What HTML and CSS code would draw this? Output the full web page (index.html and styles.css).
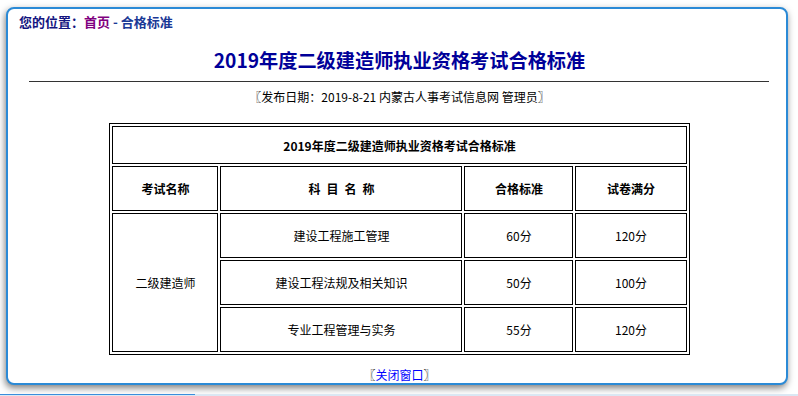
FILE: index.html
```html
<!DOCTYPE html>
<html lang="zh-CN">
<head>
<meta charset="utf-8">
<title>2019年度二级建造师执业资格考试合格标准</title>
<link rel="stylesheet" href="styles.css">
</head>
<body>
<div class="window">
  <div class="crumb">您的位置：<a class="crumb-home" href="#">首页</a><span class="crumb-cur"> - 合格标准</span></div>
  <div class="content">
    <h1 class="title">2019年度二级建造师执业资格考试合格标准</h1>
    <div class="rule"></div>
    <p class="meta">〖发布日期：2019-8-21 内蒙古人事考试信息网 管理员〗</p>
    <table class="grid">
      <colgroup>
        <col class="c1">
        <col class="c2">
        <col class="c3">
        <col class="c4">
      </colgroup>
      <tr class="row-cap">
        <td class="cap" colspan="4">2019年度二级建造师执业资格考试合格标准</td>
      </tr>
      <tr class="row">
        <td class="hd">考试名称</td>
        <td class="hd">科&ensp;目&ensp;名&ensp;称</td>
        <td class="hd">合格标准</td>
        <td class="hd">试卷满分</td>
      </tr>
      <tr class="row">
        <td rowspan="3">二级建造师</td>
        <td>建设工程施工管理</td>
        <td>60分</td>
        <td>120分</td>
      </tr>
      <tr class="row">
        <td>建设工程法规及相关知识</td>
        <td>50分</td>
        <td>100分</td>
      </tr>
      <tr class="row">
        <td>专业工程管理与实务</td>
        <td>55分</td>
        <td>120分</td>
      </tr>
    </table>
    <p class="close">〖<a class="close-link" href="#">关闭窗口</a>〗</p>
  </div>
</div>
<div class="taskbar"><div class="taskbar-item"></div></div>
</body>
</html>
```
FILE: styles.css
```css
html, body {
  margin: 0;
  padding: 0;
  background: #ffffff;
}
body {
  font-family: "Noto Sans CJK SC", "Noto Sans", sans-serif;
  font-size: 12px;
  color: #000;
  overflow: hidden;
}
.window {
  box-sizing: border-box;
  margin: 7px 0 0 6px;
  width: 782px;
  height: 378px;
  border: 2px solid #2b8ad6;
  border-radius: 8px;
  background: #fff;
  box-shadow: -1px 3px 7px rgba(0, 0, 0, 0.5);
}
.crumb {
  padding: 5px 11px 0 11px;
  font-size: 13px;
  line-height: 16px;
  height: 16px;
  font-weight: bold;
  color: #14147f;
}
.crumb-home {
  color: #800080;
  text-decoration: none;
}
.crumb-cur {
  color: #1a3896;
}
.content {
  padding: 0 8px 0 13px;
}
.title {
  margin: 16px 0 0 0;
  font-size: 19.2px;
  line-height: 28px;
  font-weight: bold;
  color: #000099;
  text-align: center;
}
.rule {
  margin: 7px 9px 0 8px;
  height: 1px;
  background: #333;
}
.meta {
  margin: 7px 0 0 0;
  line-height: 16px;
  text-align: center;
}
.grid {
  margin: 18px auto 0 auto;
  width: 580px;
  table-layout: fixed;
  border-collapse: separate;
  border-spacing: 2px;
  border: 1px solid #000;
}
.grid td {
  box-sizing: border-box;
  border: 1px solid #000;
  padding: 0;
  text-align: center;
  vertical-align: middle;
  height: 45px;
}
.grid td.cap {
  height: 38px;
  font-weight: bold;
}
.grid td.hd {
  font-weight: bold;
}
.c1 { width: 106px; }
.c2 { width: 242px; }
.c3 { width: 109px; }
.c4 { width: 111px; }
.close {
  margin: 12px 0 0 0;
  line-height: 16px;
  text-align: center;
}
.close-link {
  color: #0000ff;
  text-decoration: none;
}
.taskbar {
  margin-top: 9px;
  height: 3px;
  background: #dbe7f3;
}
.taskbar-item {
  width: 195px;
  height: 1px;
  background: #3a8edc;
}
```
